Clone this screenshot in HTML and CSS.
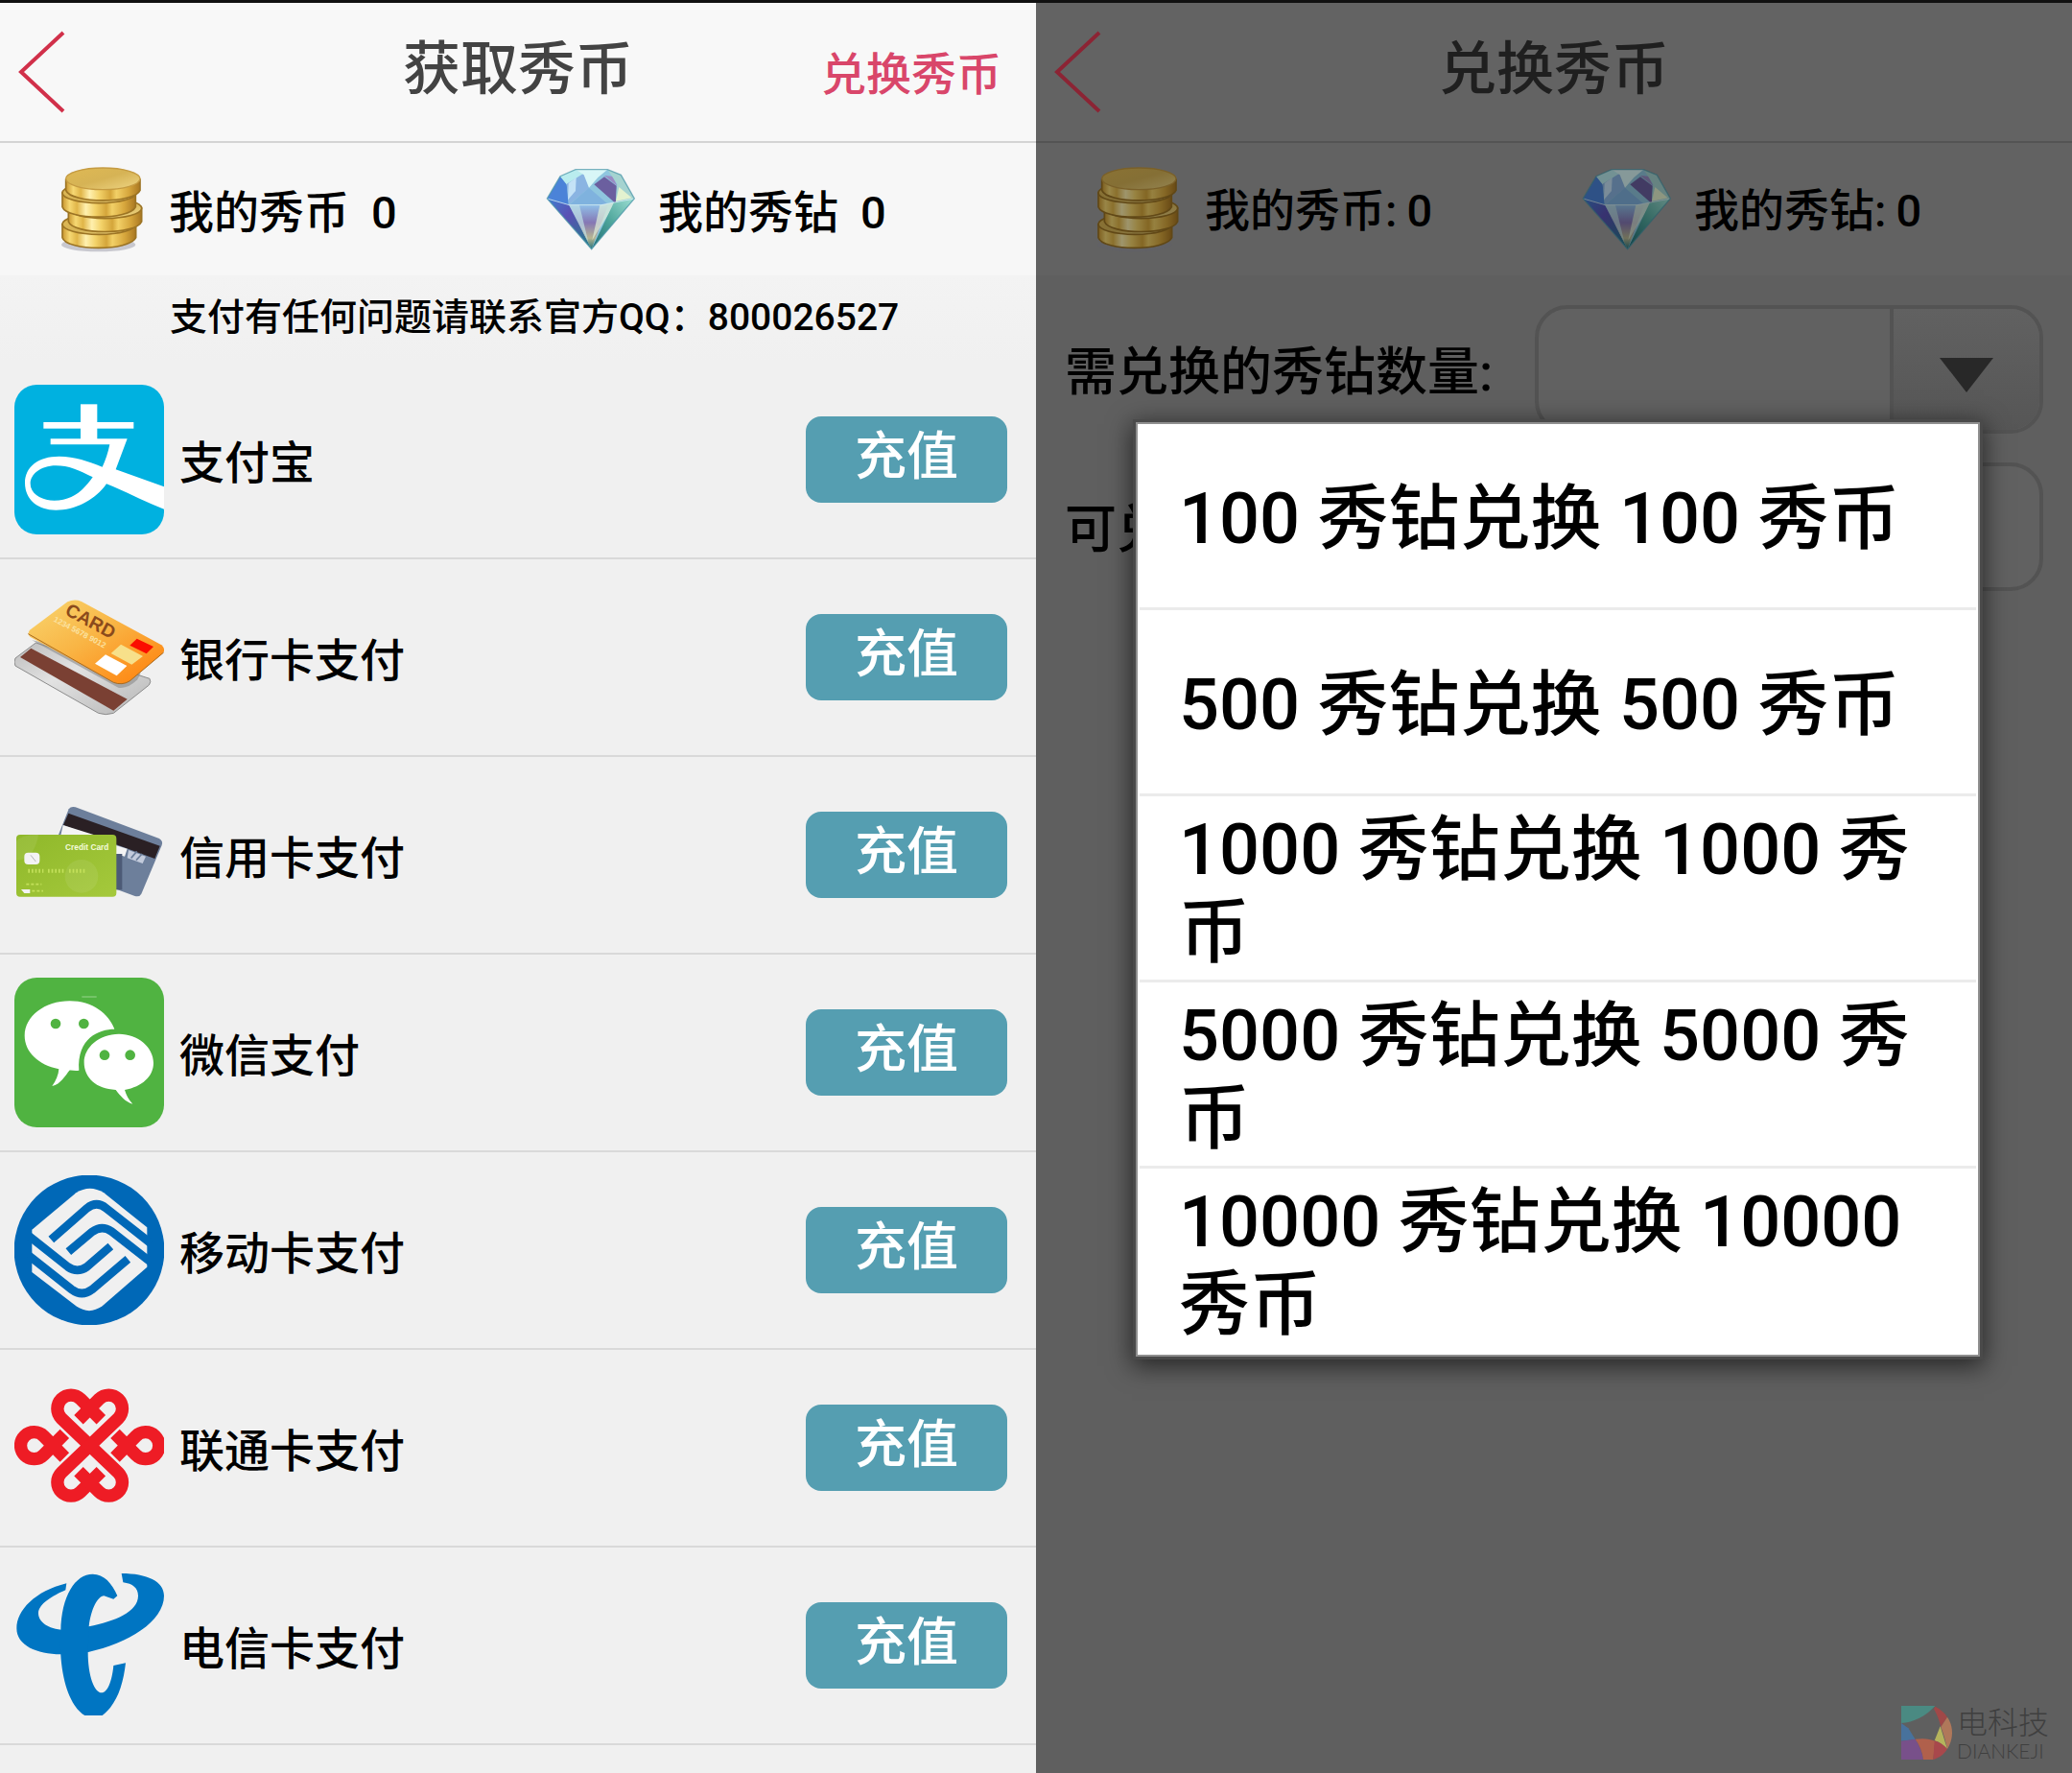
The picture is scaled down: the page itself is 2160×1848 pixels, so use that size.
FILE: index.html
```html
<!DOCTYPE html>
<html lang="zh-CN">
<head>
  <meta charset="UTF-8">
  <meta name="viewport" content="width=device-width, initial-scale=1.0">
  <title>获取秀币</title>
  <link rel="stylesheet" href="styles.css">
</head>
<body>
  <!-- Shared icons -->
  <svg class="sprite" aria-hidden="true">
    <defs>
      <linearGradient id="gold" x1="0" x2="1" y1="0" y2="0">
        <stop offset="0" stop-color="#c9962f"/>
        <stop offset="0.1" stop-color="#f6d873"/>
        <stop offset="0.2" stop-color="#e0b548"/>
        <stop offset="0.32" stop-color="#fff0ae"/>
        <stop offset="0.45" stop-color="#f3d269"/>
        <stop offset="0.6" stop-color="#d4a53a"/>
        <stop offset="0.68" stop-color="#f2d067"/>
        <stop offset="0.85" stop-color="#d6a63c"/>
        <stop offset="1" stop-color="#a97722"/>
      </linearGradient>
      <linearGradient id="goldTop" x1="0" x2="1" y1="0" y2="1">
        <stop offset="0" stop-color="#dfb954"/>
        <stop offset="0.5" stop-color="#d6b355"/>
        <stop offset="1" stop-color="#efd685"/>
      </linearGradient>
      <linearGradient id="gemLeft" x1="0" x2="1" y1="0" y2="1">
        <stop offset="0" stop-color="#3f7fd0"/>
        <stop offset="0.4" stop-color="#5a50b4"/>
        <stop offset="1" stop-color="#1f7f86"/>
      </linearGradient>
      <linearGradient id="gemMid" x1="0" x2="0" y1="0" y2="1">
        <stop offset="0" stop-color="#8fbfe8"/>
        <stop offset="0.4" stop-color="#8577b4"/>
        <stop offset="0.75" stop-color="#b7b692"/>
        <stop offset="1" stop-color="#23707a"/>
      </linearGradient>
      <linearGradient id="gemRight" x1="1" x2="0" y1="0" y2="1">
        <stop offset="0" stop-color="#9fe0d4"/>
        <stop offset="0.5" stop-color="#4fa69c"/>
        <stop offset="1" stop-color="#1c6a72"/>
      </linearGradient>
      <linearGradient id="cardGold" x1="0" x2="1" y1="0" y2="1">
        <stop offset="0" stop-color="#f8d670"/>
        <stop offset="0.45" stop-color="#f9b545"/>
        <stop offset="1" stop-color="#ff7d08"/>
      </linearGradient>
      <linearGradient id="cardGrey" x1="0" x2="1" y1="0" y2="1">
        <stop offset="0" stop-color="#bcbcbc"/>
        <stop offset="0.4" stop-color="#e2e2e2"/>
        <stop offset="1" stop-color="#b5b5b5"/>
      </linearGradient>
      <linearGradient id="cardGreen" x1="0" x2="1" y1="0" y2="1">
        <stop offset="0" stop-color="#8fb82a"/>
        <stop offset="1" stop-color="#a5c93c"/>
      </linearGradient>
    </defs>

    <symbol id="icon-back" viewBox="0 0 50 86">
      <path d="M47 2 L3 43 L47 84" fill="none" stroke="currentColor" stroke-width="4"/>
    </symbol>

    <symbol id="icon-coins" viewBox="0 0 330 330">
      <ellipse cx="158" cy="276" rx="116" ry="22" fill="#9a9aa8" opacity="0.5"/>
      <g stroke="#9c7424" stroke-width="5">
        <path d="M45 212 V254 C60 297 255 297 275 254 V212 Z" fill="url(#gold)"/>
        <ellipse cx="160" cy="212" rx="115" ry="32" fill="url(#goldTop)"/>
        <path d="M64 162 V204 C80 246 275 246 293 204 V162 Z" fill="url(#gold)"/>
        <ellipse cx="178" cy="162" rx="115" ry="32" fill="url(#goldTop)"/>
        <path d="M45 114 V158 C60 200 255 200 274 158 V114 Z" fill="url(#gold)"/>
        <ellipse cx="160" cy="114" rx="115" ry="32" fill="url(#goldTop)"/>
        <path d="M56 72 V106 C72 148 270 148 288 106 V72 Z" fill="url(#gold)"/>
      </g>
      <ellipse cx="172" cy="70" rx="116" ry="34" fill="url(#goldTop)" stroke="#c59b42" stroke-width="4"/>
    </symbol>

    <symbol id="icon-diamond" viewBox="0 0 330 330">
      <path d="M120 41 H220 L262 58 L304 132 L170 290 L31 132 L72 62 Z" fill="#8fc6df"/>
      <path d="M72 62 L31 132 L98 152 L92 86 Z" fill="#4b83d8"/>
      <path d="M72 62 L120 41 L150 58 L92 88 Z" fill="#b9ecee"/>
      <path d="M92 86 L150 50 L162 98 L100 150 Z" fill="#8ab4e2"/>
      <path d="M98 84 L122 66 L120 108 L96 136 Z" fill="#c4e2f6"/>
      <path d="M120 41 H220 L190 66 L162 98 L146 58 Z" fill="#d8f6f7"/>
      <path d="M162 98 L222 150 L100 152 Z" fill="#7fb2de"/>
      <path d="M178 88 L210 64 L248 92 L246 148 Z" fill="#6b5f9f"/>
      <path d="M210 60 L236 62 L250 92 Z" fill="#9a8cc4"/>
      <path d="M220 41 L262 58 L304 132 L246 140 L250 86 Z" fill="#a5d3d0"/>
      <path d="M256 96 L296 130 L246 140 Z" fill="#e3f2cf"/>
      <path d="M31 132 L100 152 L170 290 Z" fill="url(#gemLeft)"/>
      <path d="M100 152 H222 L170 290 Z" fill="url(#gemMid)"/>
      <path d="M100 152 L132 152 L160 268 Z" fill="#bfe0e4" opacity="0.7"/>
      <path d="M196 152 L246 144 L172 262 Z" fill="#dff0d8" opacity="0.7"/>
      <path d="M304 132 L240 144 L170 290 Z" fill="url(#gemRight)"/>
      <path d="M31 132 L100 152 H200 L304 132" fill="none" stroke="#e2f5f8" stroke-width="3" opacity="0.7"/>
      <path d="M120 41 H220 L262 58 L304 132 L170 290 L31 132 L72 62 Z" fill="none" stroke="#4d97a8" stroke-width="4" opacity="0.7"/>
    </symbol>
  </svg>

  <!-- Recharge page -->
  <main class="screen">
    <header class="topbar">
      <button class="back" type="button" aria-label="返回"><svg><use href="#icon-back"/></svg></button>
      <h1 class="title">获取秀币</h1>
      <a class="topbar-link" href="#exchange">兑换秀币</a>
    </header>

    <section class="stats">
      <div class="stat">
        <svg class="stat-icon"><use href="#icon-coins"/></svg>
        <span class="stat-label">我的秀币</span>
        <span class="stat-value">0</span>
      </div>
      <div class="stat">
        <svg class="stat-icon"><use href="#icon-diamond"/></svg>
        <span class="stat-label">我的秀钻</span>
        <span class="stat-value">0</span>
      </div>
    </section>

    <p class="notice">支付有任何问题请联系官方QQ：800026527</p>

    <ul class="pay-list">
      <li class="pay-item">
        <svg class="pay-icon" viewBox="45 63 468 468">
          <rect x="45" y="63" width="468" height="468" rx="70" fill="#00b1e0"/>
          <g fill="#fff">
            <rect x="252" y="124" width="52" height="112"/>
            <rect x="136" y="180" width="282" height="20"/>
            <path d="M158 232 H398 L362 328 L513 382 V452 C450 428 390 395 333 373 C300 420 240 455 175 455 C110 455 78 415 78 370 C78 320 120 287 185 287 C235 287 275 302 320 320 C330 300 338 275 343 250 H158 Z M290 352 C245 330 215 316 175 316 C125 316 95 345 95 372 C95 405 130 425 170 425 C225 425 260 395 290 352 Z" fill-rule="evenodd"/>
          </g>
        </svg>
        <span class="pay-name">支付宝</span>
        <button class="pay-btn" type="button">充值</button>
      </li>
      <li class="pay-item">
        <svg class="pay-icon" viewBox="45 681 468 468">
          <path d="M48 918 L112 870 L468 982 Q474 992 466 1002 L355 1090 Q330 1098 308 1090 L48 942 Q42 930 48 918 Z" fill="url(#cardGrey)" stroke="#8c8c8c" stroke-width="3"/>
          <path d="M97 887 L398 1046 L355 1082 L63 915 Z" fill="#7a4033"/>
          <path d="M100 862 L370 1010 Q400 1015 430 985 L440 965 L130 868 Z" fill="#8a8a8a" opacity="0.6"/>
          <path d="M211 742 Q233 732 255 741 L505 877 Q520 890 508 904 L405 990 Q382 1004 355 993 L95 852 Q84 842 93 830 Z" fill="url(#cardGold)"/>
          <path d="M88 842 L355 994 Q382 1004 405 990 L512 900" fill="none" stroke="#a86a20" stroke-width="3"/>
          <text class="card-text" transform="translate(200 780) rotate(28)" font-size="58" fill="#8b4a1c">CARD</text>
          <text class="card-text" transform="translate(166 802) rotate(28)" font-size="25" fill="#fbe2a0">1234 5678 9012</text>
          <path d="M428 857 L480 882 L458 904 L406 878 Z" fill="#fb0d00"/>
          <path d="M378 875 L447 912 L412 938 L347 903 Z" fill="#f7e08a"/>
          <path d="M330 907 L397 942 L365 973 L297 935 Z" fill="#fff"/>
        </svg>
        <span class="pay-name">银行卡支付</span>
        <button class="pay-btn" type="button">充值</button>
      </li>
      <li class="pay-item">
        <svg class="pay-icon" viewBox="45 99 468 468">
          <path d="M215 190 Q222 180 236 184 L498 282 Q511 290 506 303 L442 455 Q436 466 422 462 L180 372 L184 268 Z" fill="#6d7f9b"/>
          <path d="M214 203 L500 305 L484 345 L198 240 Z" fill="#2a2024"/>
          <path d="M197 240 L300 272 H190 Z" fill="#f4f4f4"/>
          <path d="M362 303 L398 314 L390 338 L362 330 Z" fill="#f4f4f4"/>
          <path d="M402 318 L456 338 L446 360 L398 343 Z" fill="#c3cbdc"/>
          <path d="M410 343 L428 322 M426 350 L444 330" stroke="#6d7f9b" stroke-width="5"/>
          <rect x="362" y="330" width="20" height="112" fill="#4c5a76"/>
          <rect x="51" y="270" width="313" height="194" rx="12" fill="url(#cardGreen)"/>
          <path d="M51 290 Q70 268 120 270 C110 340 70 350 51 350 Z" fill="#fff" opacity="0.08"/>
          <circle cx="255" cy="400" r="52" fill="#fff" opacity="0.08"/>
          <text class="card-text" x="204" y="318" font-size="25" fill="#f4fbdc">Credit Card</text>
          <rect x="76" y="326" width="48" height="37" rx="12" fill="#f3f3f3"/>
          <path d="M96 334 L112 354" stroke="#b5b5b5" stroke-width="3"/>
          <path d="M88 383 H136 M150 383 H200 M216 383 H266" stroke="#c3e05a" stroke-width="12" stroke-dasharray="5 6"/>
          <path d="M82 425 H130 M100 446 H135" stroke="#c3e05a" stroke-width="5" stroke-dasharray="9 6"/>
          <path d="M66 441 H94 V453 H76 Z" fill="#f3f3f3"/>
        </svg>
        <span class="pay-name">信用卡支付</span>
        <button class="pay-btn" type="button">充值</button>
      </li>
      <li class="pay-item">
        <svg class="pay-icon" viewBox="45 717 468 468">
          <rect x="45" y="717" width="468" height="468" rx="70" fill="#50b341"/>
          <rect x="256" y="775" width="46" height="4" fill="#86cc7b"/>
          <path d="M218 790 C290 790 340 830 358 878 C310 878 240 905 247 1007 C235 1009 225 1006 217 1007 C205 1022 190 1050 163 1056 C175 1040 183 1020 184 1003 C120 990 77 950 77 898 C77 838 140 790 218 790 Z" fill="#fff"/>
          <path d="M372 893 C432 893 480 935 480 984 C480 1025 445 1058 390 1068 C395 1085 402 1098 415 1112 C392 1106 375 1085 362 1068 C300 1065 263 1030 263 982 C263 935 310 893 372 893 Z" fill="#fff"/>
          <g fill="#50b341">
            <circle cx="174" cy="861" r="16"/>
            <circle cx="262" cy="861" r="16"/>
            <circle cx="327" cy="959" r="16"/>
            <circle cx="407" cy="959" r="16"/>
          </g>
        </svg>
        <span class="pay-name">微信支付</span>
        <button class="pay-btn" type="button">充值</button>
      </li>
      <li class="pay-item">
        <svg class="pay-icon" viewBox="45 75 468 468">
          <circle cx="279" cy="309" r="235" fill="#0068b7"/>
          <path d="M100 245 L238 130 Q281 103 325 130 L460 238 V362 L320 484 Q279 513 238 484 L100 378 Z" fill="#f0f0f0"/>
          <g fill="none" stroke="#0068b7" stroke-width="26">
            <path d="M160 276 L272 178 Q302 154 332 178 L472 288"/>
            <path d="M214 314 L288 252 Q318 230 348 250 L472 347"/>
            <path d="M400 337 L288 432 Q256 456 224 432 L90 326"/>
            <path d="M346 297 L272 361 Q242 382 212 361 L88 263"/>
          </g>
        </svg>
        <span class="pay-name">移动卡支付</span>
        <button class="pay-btn" type="button">充值</button>
      </li>
      <li class="pay-item">
        <svg class="pay-icon" viewBox="45 693 468 468">
          <g fill="none" stroke="#ee1c25" stroke-width="40">
            <path d="M283 922 L192 835 A42 42 0 1 1 252 775 L316 839"/>
            <path d="M279 922 L370 835 A42 42 0 1 0 310 775 L246 839"/>
            <path d="M283 918 L192 1005 A42 42 0 1 0 252 1065 L316 1001"/>
            <path d="M279 918 L370 1005 A42 42 0 1 1 310 1065 L246 1001"/>
            <path d="M202 957 L137 891 A42 42 0 1 0 137 949 L202 883"/>
            <path d="M360 957 L425 891 A42 42 0 1 1 425 949 L360 883"/>
          </g>
        </svg>
        <span class="pay-name">联通卡支付</span>
        <button class="pay-btn" type="button">充值</button>
      </li>
      <li class="pay-item">
        <svg class="pay-icon" viewBox="45 111 468 468">
          <g fill="#0075c2">
            <path d="M208 151 C110 175 52 235 52 292 C52 345 115 373 190 373 L276 366 C400 340 513 270 513 190 C513 145 460 120 380 120 L385 148 C415 152 432 165 432 190 C432 240 360 270 278 286 L192 296 C140 290 120 265 120 245 C120 215 165 190 205 172 Z"/>
            <path d="M367 190 C350 150 325 122 290 122 C235 122 192 190 190 300 C182 430 215 535 265 564 H320 C365 530 385 470 393 400 L355 408 C350 460 335 493 318 493 C295 493 275 440 275 366 L278 286 C285 230 305 192 325 190 L355 200 Z"/>
          </g>
        </svg>
        <span class="pay-name">电信卡支付</span>
        <button class="pay-btn" type="button">充值</button>
      </li>
    </ul>
  </main>

  <!-- Exchange page with the amount picker open -->
  <section class="screen screen-dim" id="exchange">
    <header class="topbar">
      <button class="back" type="button" aria-label="返回"><svg><use href="#icon-back"/></svg></button>
      <h2 class="title">兑换秀币</h2>
    </header>

    <section class="stats">
      <div class="stat">
        <svg class="stat-icon"><use href="#icon-coins"/></svg>
        <span class="stat-label">我的秀币:</span>
        <span class="stat-value">0</span>
      </div>
      <div class="stat">
        <svg class="stat-icon"><use href="#icon-diamond"/></svg>
        <span class="stat-label">我的秀钻:</span>
        <span class="stat-value">0</span>
      </div>
    </section>

    <form class="exchange-form">
      <div class="field">
        <label for="amount">需兑换的秀钻数量:</label>
        <div class="select-wrap">
          <select id="amount"><option></option></select>
          <span class="select-arrow"><svg viewBox="0 0 56 36"><path d="M0 0 H56 L28 36 Z" fill="#282828"/></svg></span>
        </div>
      </div>
      <div class="field">
        <label for="result">可兑换的秀币数量:</label>
        <input id="result" type="text" readonly>
      </div>
    </form>

    <div class="modal-layer">
      <ul class="modal">
        <li><button type="button">100 秀钻兑换 100 秀币</button></li>
        <li><button type="button">500 秀钻兑换 500 秀币</button></li>
        <li><button type="button">1000 秀钻兑换 1000 秀币</button></li>
        <li><button type="button">5000 秀钻兑换 5000 秀币</button></li>
        <li><button type="button">10000 秀钻兑换 10000 秀币</button></li>
      </ul>
    </div>

    <div class="watermark">
      <svg class="watermark-logo" viewBox="62 108 162 168">
        <path d="M62 108 H168 C140 140 100 160 62 162 Z" fill="#4a8a82"/>
        <path d="M168 110 C185 118 198 130 206 143 L186 174 C180 150 172 132 164 118 Z" fill="#a04848"/>
        <path d="M206 143 C228 175 224 215 206 243 C200 215 194 195 186 174 Z" fill="#b0785a"/>
        <path d="M184 172 L206 243 C190 228 178 220 166 217 Z" fill="#b5b45c"/>
        <path d="M62 162 L84 178 L106 213 L62 218 Z" fill="#48729c"/>
        <path d="M62 218 L106 212 C120 232 128 255 131 276 H62 Z" fill="#78508a"/>
        <path d="M106 212 C135 208 152 212 168 218 L162 276 H131 C128 252 120 232 106 212 Z" fill="#b0604c"/>
        <path d="M166 217 C182 222 196 232 206 243 C196 260 180 271 162 276 Z" fill="#a8484c"/>
      </svg>
      <div class="watermark-text">
        <span class="watermark-cn">电科技</span>
        <span class="watermark-en">DIANKEJI</span>
      </div>
    </div>
  </section>
</body>
</html>
```
FILE: styles.css
```css
* {
  box-sizing: border-box;
}
body {
  margin: 0;
  min-height: 100vh;
  display: grid;
  grid-template-columns: 1fr 1fr;
  border-top: 3px solid #111111;
  background-color: #f0f0f0;
  font-family: Roboto, "Noto Sans CJK SC", sans-serif;
  font-weight: 500;
  color: #000000;
}
button, input, select {
  font: inherit;
  color: inherit;
}
ul {
  list-style: none;
  margin: 0;
  padding: 0;
}
.sprite {
  position: absolute;
  width: 0;
  height: 0;
}
.screen {
  position: relative;
  height: calc(100vh - 3px);
  overflow: hidden;
  background-color: #f0f0f0;
}

/* Top bar */
.topbar {
  display: grid;
  grid-template-columns: 1fr auto 1fr;
  align-items: center;
  height: 146px;
  padding: 0 36px 0 16px;
  border-bottom: 2px solid #d4d4d4;
  background-color: #f8f8f8;
}
.back {
  justify-self: start;
  padding: 0 3px;
  border: none;
  background: none;
  color: #d1304a;
  cursor: pointer;
}
.back svg {
  display: block;
  width: 50px;
  height: 86px;
}
.title {
  margin: 0;
  padding: 0 0 4px 20px;
  font-size: 60px;
  line-height: 72px;
  font-weight: 500;
  color: #434343;
}
.topbar-link {
  justify-self: end;
  padding-top: 6px;
  font-size: 47px;
  line-height: 56px;
  color: #d9466a;
  text-decoration: none;
}

/* Balances */
.stats {
  display: grid;
  grid-template-columns: 1fr 1fr;
  height: 138px;
  padding: 0 10px 0 50px;
  background-color: #f7f7f7;
}
.stat {
  display: flex;
  align-items: center;
  font-size: 47px;
  line-height: 56px;
}
.stat-icon {
  width: 110px;
  height: 110px;
}
.stat-label {
  margin-left: 16px;
  padding-top: 8px;
}
.stat-value {
  margin-left: 23px;
  padding-top: 8px;
}

.notice {
  margin: 0;
  padding: 18px 0 20px 177px;
  font-size: 39px;
  line-height: 52px;
  background: linear-gradient(#f3f3f3, #f0f0f0);
}

/* Payment methods */
.pay-item {
  display: flex;
  align-items: center;
  height: 206px;
  padding: 0 30px 0 15px;
  border-bottom: 2px solid #d9d9d9;
}
.pay-icon {
  width: 156px;
  height: 156px;
}
.pay-name {
  flex: 1;
  padding: 8px 0 0 16px;
  font-size: 47px;
  line-height: 56px;
}
.pay-btn {
  width: 210px;
  height: 90px;
  padding: 0 0 4px;
  border: none;
  border-radius: 16px;
  background-color: #559eb1;
  color: #ffffff;
  font-size: 54px;
  line-height: 64px;
  cursor: pointer;
}
.card-text {
  font-family: "Liberation Sans", sans-serif;
  font-weight: bold;
}

/* Dimmed screen behind the picker */
.screen-dim {
  background-color: #5f5f5f;
}
.screen-dim .topbar {
  border-bottom-color: #545454;
  background-color: #636363;
}
.screen-dim .back {
  color: #8c2434;
}
.screen-dim .title {
  color: #1f1f1f;
}
.screen-dim .stats {
  background-color: #626262;
}
.screen-dim .stat-icon {
  filter: brightness(0.62);
}
.screen-dim .stat-label,
.screen-dim .stat-value {
  padding-top: 4px;
}
.screen-dim .stat-value {
  margin-left: 10px;
}

/* Exchange form */
.exchange-form {
  display: flex;
  flex-direction: column;
  gap: 30px;
  padding: 31px 30px 0 30px;
}
.field {
  display: grid;
  grid-template-columns: 490px 1fr;
  align-items: center;
  font-size: 54px;
  line-height: 64px;
}
.field label {
  padding-top: 8px;
}
.field input,
.select-wrap {
  width: 100%;
  height: 134px;
  border: 4px solid #535353;
  border-radius: 34px;
  background-color: #616161;
}
.select-wrap {
  display: flex;
  overflow: hidden;
}
.select-wrap select {
  flex: 1;
  border: none;
  background: none;
  appearance: none;
}
.select-arrow {
  display: flex;
  align-items: center;
  justify-content: center;
  width: 156px;
  padding-top: 12px;
  border-left: 4px solid #535353;
  background: linear-gradient(#616161, #565656);
}
.select-arrow svg {
  width: 56px;
  height: 36px;
}

/* Amount picker */
.modal-layer {
  position: absolute;
  inset: 0;
  display: flex;
  align-items: center;
  justify-content: center;
  padding: 2px 0 0 8px;
}
.modal {
  width: 880px;
  border: 2px solid #8f8f8f;
  background-color: #ffffff;
  box-shadow: 0 0 0 3px #4a4a4a, 0 6px 24px 4px rgba(0, 0, 0, 0.6);
}
.modal li {
  margin: 0 2px;
  border-bottom: 3px solid #ebebeb;
}
.modal li:last-child {
  border-bottom-color: #ffffff;
}
.modal button {
  display: flex;
  align-items: center;
  width: 100%;
  height: 191px;
  padding: 8px 41px 0;
  border: none;
  background: none;
  font-size: 74px;
  line-height: 86px;
  text-align: left;
  cursor: pointer;
}

/* Corner mark */
.watermark {
  position: absolute;
  right: 24px;
  bottom: 10px;
  display: flex;
  align-items: center;
  gap: 4px;
  color: #3f3f3f;
}
.watermark-logo {
  width: 54px;
  height: 56px;
}
.watermark-text {
  display: flex;
  flex-direction: column;
}
.watermark-cn {
  font-family: "Noto Sans CJK SC", sans-serif;
  font-size: 32px;
  font-weight: 300;
  line-height: 38px;
}
.watermark-en {
  font-family: Lato, sans-serif;
  font-size: 21px;
  font-weight: 300;
  line-height: 26px;
}
```
